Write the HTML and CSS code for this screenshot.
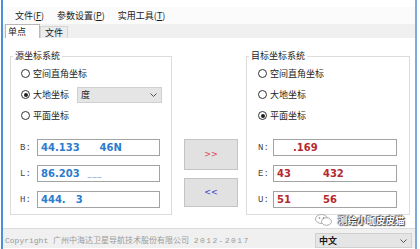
FILE: index.html
```html
<!DOCTYPE html>
<html>
<head>
<meta charset="utf-8">
<link rel="stylesheet" href="styles.css">
</head>
<body>
<div class="window">
  <div class="titlebar"></div>

  <div class="menubar">
    <span class="menu-item">文件(<u>F</u>)</span>
    <span class="menu-item">参数设置(<u>P</u>)</span>
    <span class="menu-item">实用工具(<u>T</u>)</span>
  </div>

  <div class="tabs">
    <span class="tab active">单点</span>
    <span class="tab">文件</span>
  </div>

  <div class="content">
    <fieldset class="group src">
      <legend>源坐标系统</legend>
      <div class="radio-row"><span class="radio"></span>空间直角坐标</div>
      <div class="radio-row">
        <span class="radio checked"></span>大地坐标
        <div class="combo unit">
          <span>度</span>
          <svg width="7" height="4" viewBox="0 0 7 4"><path d="M0.5 0.5 L3.5 3.5 L6.5 0.5" fill="none" stroke="#555" stroke-width="1"/></svg>
        </div>
      </div>
      <div class="radio-row"><span class="radio"></span>平面坐标</div>
      <div class="fields">
        <div class="field-row"><span class="lbl">B:</span><div class="input blue">44.133<span class="blot"></span>46N</div></div>
        <div class="field-row"><span class="lbl">L:</span><div class="input blue">86.203<span class="blot short"></span><span class="dash">_ _ _</span></div></div>
        <div class="field-row"><span class="lbl">H:</span><div class="input blue">444.<span class="blot tiny"></span>3</div></div>
      </div>
    </fieldset>

    <div class="actions">
      <button class="btn fwd">&gt;&gt;</button>
      <button class="btn back">&lt;&lt;</button>
    </div>

    <fieldset class="group dst">
      <legend>目标坐标系统</legend>
      <div class="radio-row"><span class="radio"></span>空间直角坐标</div>
      <div class="radio-row"><span class="radio"></span>大地坐标</div>
      <div class="radio-row"><span class="radio checked"></span>平面坐标</div>
      <div class="fields">
        <div class="field-row"><span class="lbl">N:</span><div class="input red"><span class="blot wide"></span>.169</div></div>
        <div class="field-row"><span class="lbl">E:</span><div class="input red">43<span class="blot mid"></span>432</div></div>
        <div class="field-row"><span class="lbl">U:</span><div class="input red">51<span class="blot mid"></span>56</div></div>
      </div>
    </fieldset>
  </div>

  <div class="statusbar">
    <span class="copyright">Copyright 广州中海达卫星导航技术股份有限公司 <span class="year">2012-2017</span></span>
    <div class="combo lang">
      <span>中文</span>
      <svg width="7" height="4" viewBox="0 0 7 4"><path d="M0.5 0.5 L3.5 3.5 L6.5 0.5" fill="none" stroke="#555" stroke-width="1"/></svg>
    </div>
  </div>

  <div class="watermark">
    <svg width="18" height="12" viewBox="0 0 18 12">
      <ellipse cx="6.5" cy="5" rx="6" ry="4.5" fill="#fff" stroke="#999" stroke-width="0.8"/>
      <ellipse cx="11.5" cy="7.5" rx="5" ry="3.8" fill="#fff" stroke="#999" stroke-width="0.8"/>
      <circle cx="4.5" cy="4" r="0.8" fill="#777"/>
      <circle cx="8.5" cy="4" r="0.8" fill="#777"/>
    </svg>
    <span>测绘小咖皮皮猫</span>
  </div>
</div>
</body>
</html>
```

FILE: styles.css
```css
html, body {
  margin: 0;
  padding: 0;
  background: #ffffff;
  overflow: hidden;
}

body {
  width: 420px;
  height: 249px;
  font-family: "Noto Sans CJK SC", "Noto Sans", sans-serif;
  font-size: 9px;
  color: #1a1a1a;
}

.window {
  position: relative;
  width: 412px;
  height: 249px;
  margin-left: 1px;
  border-left: 2px solid #4a90d9;
  border-right: 2px solid #7fa9d8;
  display: flex;
  flex-direction: column;
}

.titlebar {
  height: 7px;
  background: #ffffff;
}

.menubar {
  height: 17px;
  line-height: 17px;
  background: #fbfbfb;
  display: flex;
  gap: 13px;
  padding-left: 12px;
}

.menu-item u {
  text-decoration: underline;
}

.tabs {
  height: 14px;
  background: #f0f0f0;
  display: flex;
  align-items: flex-end;
  padding-left: 2px;
}

.tab {
  height: 12px;
  line-height: 12px;
  padding: 0 4px;
  background: #ececec;
  border: 1px solid #d4d4d4;
  border-bottom: none;
  box-sizing: border-box;
}

.tab.active {
  height: 14px;
  line-height: 13px;
  width: 35px;
  padding: 0 2px;
  background: #ffffff;
  border-color: #b8b8b8;
}

.content {
  height: 191px;
  box-sizing: border-box;
  padding: 12px 5px 0 7px;
  background: #ffffff;
  border-bottom: 1px solid #dadada;
  display: flex;
  align-items: flex-start;
}

.group {
  margin: 0;
  padding: 1px 0 0 0;
  height: 165px;
  box-sizing: border-box;
  border: 1px solid #dcdcdc;
  min-width: 0;
}

.group.src {
  width: 162px;
}

.group.dst {
  width: 164px;
  margin-left: 8px;
}

.group legend {
  margin-left: 2px;
  padding: 0 2px;
  font-size: 9px;
  line-height: 12px;
  color: #1a1a1a;
}

.radio-row {
  height: 21px;
  display: flex;
  align-items: center;
  padding-left: 10px;
  padding-right: 9px;
}

.dst .radio-row {
  padding-left: 11px;
}

.radio {
  width: 9px;
  height: 9px;
  box-sizing: border-box;
  border: 1px solid #333333;
  border-radius: 50%;
  background: #ffffff;
  margin-right: 3px;
  display: flex;
  align-items: center;
  justify-content: center;
}

.radio.checked::after {
  content: "";
  width: 4px;
  height: 4px;
  border-radius: 50%;
  background: #222222;
}

.combo {
  display: flex;
  align-items: center;
  justify-content: space-between;
  box-sizing: border-box;
  background: #e5e5e5;
  border: 1px solid #d0d0d0;
  padding: 0 4px 0 3px;
}

.combo.unit {
  margin-left: auto;
  width: 85px;
  height: 16px;
}

.fields {
  margin-top: 13px;
  display: flex;
  flex-direction: column;
  gap: 9px;
}

.field-row {
  height: 17px;
  display: flex;
  align-items: center;
  padding-left: 9px;
}

.dst .field-row {
  padding-left: 11px;
}

.lbl {
  width: 17px;
  font-family: "Liberation Mono", monospace;
  font-size: 9px;
  color: #444444;
}

.dst .lbl {
  width: 15px;
}

.input {
  height: 17px;
  box-sizing: border-box;
  border: 1px solid #a3a3a3;
  background: #ffffff;
  padding-left: 3px;
  line-height: 15px;
  font-family: "DejaVu Sans", sans-serif;
  font-weight: bold;
  font-size: 10px;
  white-space: nowrap;
  overflow: hidden;
  display: flex;
  align-items: center;
}

.src .input {
  width: 123px;
}

.dst .input {
  width: 124px;
}

.input.blue {
  color: #2b7bcf;
}

.input.red {
  color: #b32a30;
}

.blot {
  display: inline-block;
  width: 20px;
}

.blot.short {
  width: 8px;
}

.blot.tiny {
  width: 10px;
}

.blot.mid {
  width: 32px;
}

.blot.wide {
  width: 16px;
}

.dash {
  color: #8fb8e6;
  font-size: 8px;
  letter-spacing: -1px;
}

.actions {
  width: 54px;
  margin: 89px 0 0 12px;
  display: flex;
  flex-direction: column;
  gap: 8px;
}

.btn {
  width: 54px;
  height: 31px;
  background: #e1e1e1;
  border: 1px solid #c4c4c4;
  font-family: "DejaVu Sans", sans-serif;
  font-size: 8px;
  padding: 0;
}

.btn.back {
  height: 29px;
  color: #3a3ad0;
}

.btn.fwd {
  color: #e2404c;
}

.statusbar {
  height: 19px;
  background: #f0f0f0;
  display: flex;
  align-items: flex-end;
  padding-left: 2px;
}

.copyright {
  line-height: 15px;
  font-family: "Liberation Mono", "Noto Sans CJK SC", monospace;
  font-size: 8px;
  color: #9a9a9a;
  white-space: nowrap;
}

.copyright .year {
  letter-spacing: 1.4px;
}

.combo.lang {
  margin-left: auto;
  margin-right: 3px;
  width: 97px;
  height: 15px;
  font-size: 9px;
  font-weight: bold;
}

.watermark {
  position: absolute;
  left: 312px;
  top: 213px;
  display: flex;
  align-items: center;
  gap: 5px;
}

.watermark span {
  color: #ffffff;
  font-size: 9.5px;
  font-weight: bold;
  text-shadow: 0 0 1px #333, 1px 1px 1px #333, -1px -1px 1px #555;
}
```
